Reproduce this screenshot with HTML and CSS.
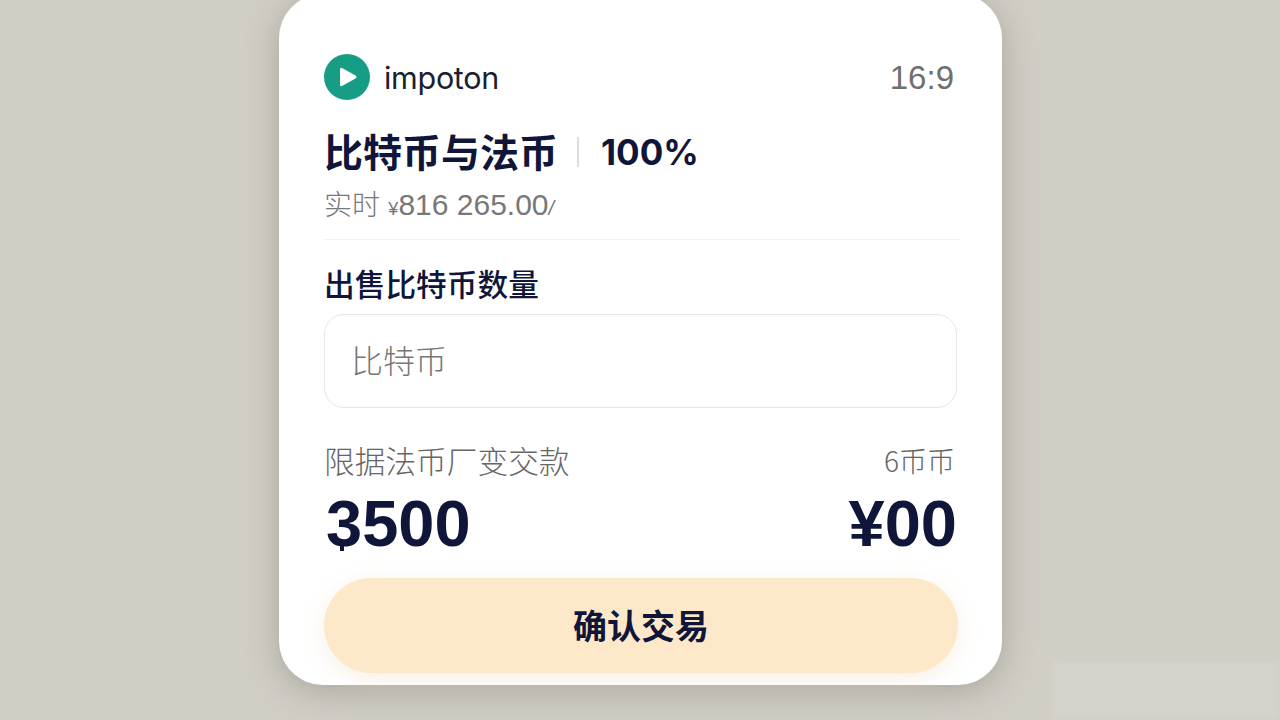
FILE: index.html
```html
<!DOCTYPE html>
<html lang="zh-CN">

<head>
    <meta charset="UTF-8">
    <meta name="viewport" content="width=device-width, initial-scale=1.0">
    <title>impoton</title>
    <link rel="stylesheet" href="styles.css">
</head>

<body>
    <div class="patch"></div>
    <div id="card">
        <div class="top">
            <div class="brand">
                <svg class="logo" viewBox="0 0 46 46">
                    <circle cx="23" cy="23" r="23" fill="#179c85" />
                    <path d="M18 14 L31.5 21.6 Q33.5 23 31.5 24.4 L18 32 Q16 33 16 30.5 V15.5 Q16 13 18 14 Z" fill="#fff" />
                </svg>
                <span class="name">impoton</span>
            </div>
            <span class="time">16:9</span>
        </div>
        <div class="title">
            <span>比特币与法币</span>
            <i class="sep"></i>
            <span class="percent">100%</span>
        </div>
        <div class="rate"><span class="rate-cn">实时</span> <small>¥</small>816 265.00<em>/</em></div>
        <div class="line"></div>
        <label class="label">出售比特币数量</label>
        <div class="input">比特币</div>
        <div class="row info">
            <span>限据法币厂变交款</span>
            <span class="unit">6币币</span>
        </div>
        <div class="row amount">
            <span class="coin">3500</span>
            <span>¥00</span>
        </div>
        <button class="confirm">确认交易</button>
    </div>
</body>

</html>
```

FILE: styles.css
```css
* {
    box-sizing: border-box;
    padding: 0;
    margin: 0;
}

body {
    width: 1280px;
    height: 720px;
    overflow: hidden;
    position: relative;
    background: #d1cec6;
    font-family: "Liberation Sans", "Noto Sans CJK SC", sans-serif;
    color: #10163a;
}

/* faint lighter smudge in the bottom right corner */
.patch {
    position: absolute;
    left: 1052px;
    top: 662px;
    width: 228px;
    height: 58px;
    background: #d4d2ca;
    filter: blur(2px);
}

#card {
    position: relative;
    width: 723px;
    height: 691px;
    margin: -6px 0 0 279px;
    padding: 60px 45px 0;
    background: #fff;
    border-radius: 44px;
    box-shadow: 0 6px 34px rgba(110, 104, 92, 0.4);
}

.top {
    display: flex;
    justify-content: space-between;
    align-items: center;
    height: 46px;
    padding-right: 3px;
}

.brand {
    display: flex;
    align-items: center;
    gap: 14px;
}

.logo {
    width: 46px;
    height: 46px;
}

.name {
    font-family: Inter, sans-serif;
    font-size: 30.5px;
    color: #1b2030;
    letter-spacing: -0.3px;
}

.time {
    padding-top: 2px;
    font-size: 33px;
    color: #6f6f6f;
}

.title {
    display: flex;
    align-items: center;
    height: 50px;
    margin-top: 25px;
    font-family: "Noto Sans CJK SC", sans-serif;
    font-size: 39px;
    font-weight: 700;
}

.sep {
    width: 2px;
    height: 30px;
    margin: 4px 22px 0 19px;
    background: #dcdcdc;
}

.percent {
    margin-top: 4px;
    font-family: Inter, sans-serif;
    font-size: 35px;
    font-weight: 700;
}

.rate {
    height: 40px;
    margin-top: 8px;
    font-size: 30px;
    line-height: 40px;
    color: #787878;
    white-space: nowrap;
}

.rate-cn {
    font-family: "Noto Sans CJK SC", sans-serif;
    font-size: 28px;
    font-weight: 300;
}

.rate small {
    font-size: 18px;
}

.rate em {
    font-size: 20px;
}

.line {
    height: 1px;
    width: 636px;
    margin-top: 16px;
    background: #f3f3f2;
}

.label {
    display: block;
    height: 44px;
    margin-top: 21px;
    font-family: "Noto Sans CJK SC", sans-serif;
    font-size: 30.7px;
    font-weight: 500;
    line-height: 44px;
}

.input {
    display: flex;
    align-items: center;
    width: 633px;
    height: 94px;
    margin-top: 9px;
    padding: 0 0 4px 26px;
    border: 1px solid #e6e6e4;
    border-radius: 20px;
    font-family: "Noto Sans CJK SC", sans-serif;
    font-size: 32px;
    font-weight: 300;
    color: #777;
}

.row {
    display: flex;
    justify-content: space-between;
}

.info {
    height: 44px;
    margin-top: 30px;
    padding-right: 2px;
    font-family: "Noto Sans CJK SC", sans-serif;
    font-size: 30.7px;
    font-weight: 300;
    line-height: 44px;
    color: #666;
}

.unit {
    font-size: 28px;
}

.amount {
    height: 72px;
    margin-top: 6px;
    padding: 0 0 0 2px;
    font-size: 65px;
    font-weight: 700;
    line-height: 72px;
}

/* little tail under the 3 */
.coin {
    position: relative;
}

.coin::after {
    content: '';
    position: absolute;
    left: 14px;
    bottom: 9px;
    width: 4px;
    height: 6px;
    background: #10163a;
}

.confirm {
    display: block;
    width: 634px;
    height: 95px;
    margin-top: 18px;
    padding-bottom: 3px;
    border: 0;
    border-radius: 48px;
    background: #fde9c9;
    box-shadow: 0 6px 22px rgba(240, 225, 195, 0.45);
    font-family: "Noto Sans CJK SC", sans-serif;
    font-size: 34px;
    font-weight: 700;
    color: #10163a;
}
```
